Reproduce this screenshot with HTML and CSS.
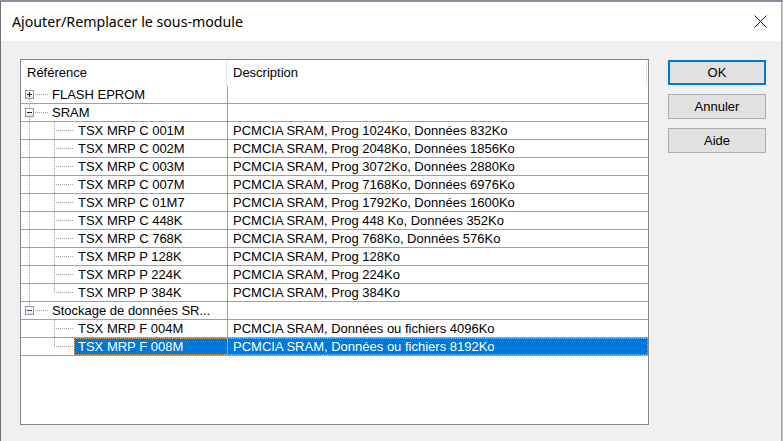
FILE: index.html
```html
<!DOCTYPE html>
<html lang="fr">
<head>
<meta charset="utf-8">
<title>Ajouter/Remplacer le sous-module</title>
<link rel="stylesheet" href="styles.css">
</head>
<body>
<svg class="defs" width="0" height="0">
  <defs>
    <linearGradient id="boxg" x1="0" y1="0" x2="0" y2="1">
      <stop offset="0" stop-color="#ffffff"/>
      <stop offset="1" stop-color="#e4e4e4"/>
    </linearGradient>
    <symbol id="root-first-plus" viewBox="0 0 31 17">
      <g stroke="#a0a0a0" stroke-dasharray="1 1" fill="none">
        <path d="M8.5 13V17"/><path d="M14 8.5H28"/>
      </g>
      <rect x="4.5" y="4.5" width="8" height="8" fill="url(#boxg)" stroke="#969696"/>
      <path d="M6 8.5H11M8.5 6V11" stroke="#222" fill="none"/>
    </symbol>
    <symbol id="root-mid-minus" viewBox="0 0 31 17">
      <g stroke="#a0a0a0" stroke-dasharray="1 1" fill="none">
        <path d="M8.5 0V4"/><path d="M8.5 13V17"/><path d="M14 8.5H28"/>
      </g>
      <rect x="4.5" y="4.5" width="8" height="8" fill="url(#boxg)" stroke="#969696"/>
      <path d="M6 8.5H11" stroke="#222" fill="none"/>
    </symbol>
    <symbol id="root-last-minus" viewBox="0 0 31 17">
      <g stroke="#a0a0a0" stroke-dasharray="1 1" fill="none">
        <path d="M8.5 0V4"/><path d="M14 8.5H28"/>
      </g>
      <rect x="4.5" y="4.5" width="8" height="8" fill="url(#boxg)" stroke="#969696"/>
      <path d="M6 8.5H11" stroke="#2c4f86" fill="none"/>
    </symbol>
    <symbol id="child-mid-root" viewBox="0 0 53 17">
      <g stroke="#a0a0a0" stroke-dasharray="1 1" fill="none">
        <path d="M8.5 0V17"/><path d="M33.5 0V17"/><path d="M35 8.5H53"/>
      </g>
    </symbol>
    <symbol id="child-last-root" viewBox="0 0 53 17">
      <g stroke="#a0a0a0" stroke-dasharray="1 1" fill="none">
        <path d="M8.5 0V17"/><path d="M33.5 0V9"/><path d="M35 8.5H53"/>
      </g>
    </symbol>
    <symbol id="child-mid" viewBox="0 0 53 17">
      <g stroke="#a0a0a0" stroke-dasharray="1 1" fill="none">
        <path d="M33.5 0V17"/><path d="M35 8.5H53"/>
      </g>
    </symbol>
    <symbol id="child-last" viewBox="0 0 53 17">
      <g stroke="#a0a0a0" stroke-dasharray="1 1" fill="none">
        <path d="M33.5 0V9"/><path d="M35 8.5H53"/>
      </g>
    </symbol>
  </defs>
</svg>

<div class="topstrip"></div>
<div class="window">
  <div class="titlebar">
    <span class="title">Ajouter/Remplacer le sous-module</span>
    <svg class="close" width="13" height="13" viewBox="0 0 13 13">
      <path d="M0.5 0.5L12.5 12.5M12.5 0.5L0.5 12.5" stroke="#1a1a1a" stroke-width="1" fill="none"/>
    </svg>
  </div>
  <div class="body">
    <div class="list">
      <div class="header">
        <div class="hcell h1">Référence</div>
        <div class="hcell h2">Description</div>
        <div class="hcell h3"></div>
      </div>

      <div class="row">
        <div class="c1"><svg class="tree root" viewBox="0 0 31 17"><use href="#root-first-plus" width="31" height="17"/></svg><span class="label">FLASH EPROM</span></div>
        <div class="c2"></div>
      </div>
      <div class="row">
        <div class="c1"><svg class="tree root" viewBox="0 0 31 17"><use href="#root-mid-minus" width="31" height="17"/></svg><span class="label">SRAM</span></div>
        <div class="c2"></div>
      </div>
      <div class="row">
        <div class="c1"><svg class="tree"><use href="#child-mid-root"/></svg><span class="label child">TSX MRP C 001M</span></div>
        <div class="c2">PCMCIA SRAM, Prog 1024Ko, Données 832Ko</div>
      </div>
      <div class="row">
        <div class="c1"><svg class="tree"><use href="#child-mid-root"/></svg><span class="label child">TSX MRP C 002M</span></div>
        <div class="c2">PCMCIA SRAM, Prog 2048Ko, Données 1856Ko</div>
      </div>
      <div class="row">
        <div class="c1"><svg class="tree"><use href="#child-mid-root"/></svg><span class="label child">TSX MRP C 003M</span></div>
        <div class="c2">PCMCIA SRAM, Prog 3072Ko, Données 2880Ko</div>
      </div>
      <div class="row">
        <div class="c1"><svg class="tree"><use href="#child-mid-root"/></svg><span class="label child">TSX MRP C 007M</span></div>
        <div class="c2">PCMCIA SRAM, Prog 7168Ko, Données 6976Ko</div>
      </div>
      <div class="row">
        <div class="c1"><svg class="tree"><use href="#child-mid-root"/></svg><span class="label child">TSX MRP C 01M7</span></div>
        <div class="c2">PCMCIA SRAM, Prog 1792Ko, Données 1600Ko</div>
      </div>
      <div class="row">
        <div class="c1"><svg class="tree"><use href="#child-mid-root"/></svg><span class="label child">TSX MRP C 448K</span></div>
        <div class="c2">PCMCIA SRAM, Prog 448 Ko, Données 352Ko</div>
      </div>
      <div class="row">
        <div class="c1"><svg class="tree"><use href="#child-mid-root"/></svg><span class="label child">TSX MRP C 768K</span></div>
        <div class="c2">PCMCIA SRAM, Prog 768Ko, Données 576Ko</div>
      </div>
      <div class="row">
        <div class="c1"><svg class="tree"><use href="#child-mid-root"/></svg><span class="label child">TSX MRP P 128K</span></div>
        <div class="c2">PCMCIA SRAM, Prog 128Ko</div>
      </div>
      <div class="row">
        <div class="c1"><svg class="tree"><use href="#child-mid-root"/></svg><span class="label child">TSX MRP P 224K</span></div>
        <div class="c2">PCMCIA SRAM, Prog 224Ko</div>
      </div>
      <div class="row">
        <div class="c1"><svg class="tree"><use href="#child-last-root"/></svg><span class="label child">TSX MRP P 384K</span></div>
        <div class="c2">PCMCIA SRAM, Prog 384Ko</div>
      </div>
      <div class="row">
        <div class="c1"><svg class="tree root" viewBox="0 0 31 17"><use href="#root-last-minus" width="31" height="17"/></svg><span class="label">Stockage de données SR...</span></div>
        <div class="c2"></div>
      </div>
      <div class="row">
        <div class="c1"><svg class="tree"><use href="#child-mid"/></svg><span class="label child">TSX MRP F 004M</span></div>
        <div class="c2">PCMCIA SRAM, Données ou fichiers 4096Ko</div>
      </div>
      <div class="row selected">
        <div class="c1"><svg class="tree"><use href="#child-last"/></svg><span class="label child sel">TSX MRP F 008M</span></div>
        <div class="c2 sel">PCMCIA SRAM, Données ou fichiers 8192Ko</div>
      </div>
    </div>

    <div class="buttons">
      <div class="btn default">OK</div>
      <div class="btn">Annuler</div>
      <div class="btn">Aide</div>
    </div>
  </div>
</div>
</body>
</html>
```

FILE: styles.css
```css
html, body {
  margin: 0;
  padding: 0;
}

body {
  width: 783px;
  height: 441px;
  overflow: hidden;
  background: #c8c8c8;
}

.defs {
  display: block;
  width: 0;
  height: 0;
  overflow: hidden;
}

.topstrip {
  height: 2px;
  background: #8e8a9c;
}

.window {
  width: 780px;
  height: 439px;
  border-left: 1px solid #6f6f6f;
  border-right: 1px solid #a3a3a3;
  background: #f0f0f0;
  display: flex;
  flex-direction: column;
}

.titlebar {
  height: 39px;
  flex: none;
  background: #ffffff;
  display: flex;
  align-items: center;
  justify-content: space-between;
  padding-left: 11px;
}

.title {
  font-family: "Segoe UI", "Noto Sans", sans-serif;
  font-size: 14.2px;
  color: #000;
}

.close {
  display: block;
  margin-right: 14px;
}

.body {
  display: flex;
  align-items: flex-start;
  padding: 18px 0 0 19px;
  gap: 19px;
}

.list {
  width: 627px;
  height: 364px;
  border: 1px solid #828790;
  background: #ffffff;
  font-family: "Liberation Sans", Arial, sans-serif;
  font-size: 13px;
  color: #000;
}

.header {
  display: grid;
  grid-template-columns: 206px 420px 1fr;
  height: 26px;
  line-height: 26px;
}

.hcell {
  white-space: nowrap;
  overflow: hidden;
}

.h1 {
  padding-left: 6px;
  border-right: 1px solid #e5e5e5;
}

.h2 {
  padding-left: 6px;
  border-right: 1px solid #e5e5e5;
}

.row {
  display: grid;
  grid-template-columns: 206px 1fr;
  height: 17px;
  line-height: 17px;
  border-bottom: 1px solid #a0a0a0;
}

.c1 {
  display: flex;
  align-items: stretch;
  white-space: nowrap;
  overflow: hidden;
}

.tree {
  display: block;
  flex: none;
  width: 53px;
  height: 17px;
}

.tree.root {
  width: 31px;
}

.label {
  display: block;
}

.label.child {
  padding-left: 4px;
}

.c2 {
  border-left: 1px solid #a0a0a0;
  padding-left: 5px;
  white-space: nowrap;
  overflow: hidden;
}

.sel {
  background: #0078d7;
  color: #ffffff;
  line-height: 15px;
  border-top: 1px dotted #d9a970;
  border-bottom: 1px dotted #d9a970;
}

.label.sel {
  flex: 1;
  padding-left: 3px;
  border-left: 1px dotted #d9a970;
}

.c2.sel {
  border-left: 1px solid #a0a0a0;
  border-right: 1px dotted #d9a970;
}

.buttons {
  display: flex;
  flex-direction: column;
  gap: 9px;
  margin-top: 1px;
}

.btn {
  box-sizing: border-box;
  width: 98px;
  height: 25px;
  border: 1px solid #adadad;
  background: #e1e1e1;
  font-family: "Liberation Sans", Arial, sans-serif;
  font-size: 13px;
  color: #000;
  display: flex;
  align-items: center;
  justify-content: center;
}

.btn.default {
  border: 2px solid #0078d7;
}
```
